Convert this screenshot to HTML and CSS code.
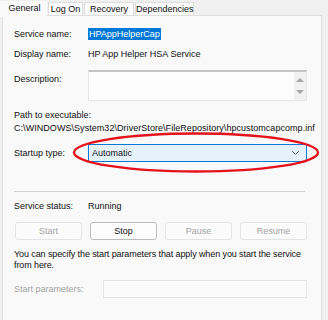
FILE: index.html
```html
<!DOCTYPE html>
<html lang="en">

<head>
    <meta charset="UTF-8">
    <title>Service Properties</title>
    <link rel="stylesheet" href="styles.css">
</head>

<body>
    <div class="dialog">
        <div class="tabs">
            <div class="tab active">General</div>
            <div class="tab tab-logon">Log On</div>
            <div class="tab tab-recovery">Recovery</div>
            <div class="tab tab-deps">Dependencies</div>
        </div>

        <div class="panel">
            <div class="row row-name">
                <span class="label">Service name:</span>
                <span class="value"><span class="selected">HPAppHelperCap</span></span>
            </div>
            <div class="row row-display">
                <span class="label">Display name:</span>
                <span class="value">HP App Helper HSA Service</span>
            </div>
            <div class="row row-desc">
                <span class="label">Description:</span>
                <div class="textarea">
                    <div class="scrollbar">
                        <svg width="8" height="6" viewBox="0 0 8 6"><path d="M0 5 L4 1 L8 5 Z" fill="#a6a6a6"/></svg>
                        <svg width="8" height="6" viewBox="0 0 8 6"><path d="M0 1 L4 5 L8 1 Z" fill="#a6a6a6"/></svg>
                    </div>
                </div>
            </div>

            <div class="path-block">
                <div class="line">Path to executable:</div>
                <div class="line path">C:\WINDOWS\System32\DriverStore\FileRepository\hpcustomcapcomp.inf</div>
            </div>

            <div class="row row-startup">
                <span class="label">Startup type:</span>
                <div class="select">
                    <span>Automatic</span>
                    <svg width="9" height="6" viewBox="0 0 9 6"><path d="M1 1 L4.5 4.5 L8 1" fill="none" stroke="#6d6d6d" stroke-width="1"/></svg>
                </div>
            </div>

            <div class="separator"></div>

            <div class="row row-status">
                <span class="label">Service status:</span>
                <span class="value">Running</span>
            </div>

            <div class="buttons">
                <button class="btn" disabled>Start</button>
                <button class="btn enabled">Stop</button>
                <button class="btn" disabled>Pause</button>
                <button class="btn" disabled>Resume</button>
            </div>

            <p class="hint">You can specify the start parameters that apply when you start the service from here.</p>

            <div class="row row-params">
                <span class="label disabled">Start parameters:</span>
                <div class="input"></div>
            </div>
        </div>

        <svg class="mark" width="252" height="44" viewBox="0 0 252 44">
            <ellipse cx="125" cy="21.5" rx="122" ry="19" fill="none" stroke="#e5121b" stroke-width="2.4"/>
        </svg>
    </div>
</body>

</html>
```

FILE: styles.css
```css
html, body {
    margin: 0;
    padding: 0;
    background: #f0f0f0;
    font-family: 'Liberation Sans', Arial, sans-serif;
    font-size: 9px;
    color: #111;
}

.dialog {
    position: relative;
    width: 328px;
    height: 320px;
    overflow: hidden;
}

.tabs {
    display: flex;
    align-items: flex-end;
    height: 16px;
    position: relative;
    z-index: 1;
}

.tab {
    box-sizing: border-box;
    height: 13px;
    line-height: 12px;
    margin-left: 1px;
    margin-bottom: 1px;
    text-align: center;
    white-space: nowrap;
    background: #fafafa;
    border: 1px solid #dedede;
    border-bottom: none;
}

.tab.active {
    width: 47px;
    height: 16px;
    line-height: 15px;
    margin-left: 0;
    margin-bottom: -1px;
    padding-left: 2px;
    background: #f9f9f9;
    border: none;
}

.tab-logon { width: 35px; }
.tab-recovery { width: 50px; }
.tab-deps { width: 59px; }

.panel {
    margin: -1px 6px 0 2px;
    height: 320px;
    padding: 12px 14px 0 11px;
    background: #f9f9f9;
    border: 1px solid #dedede;
}

.row {
    display: flex;
    align-items: center;
}

.label {
    width: 74px;
    flex-shrink: 0;
}

.label.disabled {
    width: 89px;
    color: #a4a4a4;
}

.row-name,
.row-display,
.row-status {
    height: 12px;
}

.row-display { margin-top: 8px; }
.row-status { margin-top: 8px; }

.selected {
    background: #0078d7;
    color: #fff;
    padding: 1px 1px;
}

.row-desc {
    margin-top: 10px;
    align-items: flex-start;
}

.row-desc .label {
    margin-top: 4px;
}

.textarea {
    flex: 1;
    height: 28px;
    display: flex;
    justify-content: flex-end;
    background: #fdfdfd;
    border: 1px solid #e6e6e6;
    border-top: 2px solid #c4c4c4;
}

.scrollbar {
    width: 12px;
    display: flex;
    flex-direction: column;
    align-items: center;
    justify-content: space-around;
    background: #f1f1f1;
    padding: 2px 0;
}

.path-block {
    margin: 8px -14px 0 0;
    overflow: hidden;
}

.line {
    line-height: 13px;
    white-space: nowrap;
}

.path {
    letter-spacing: 0.05px;
}

.row-startup {
    margin-top: 9px;
}

.select {
    flex: 1;
    height: 16px;
    display: flex;
    align-items: center;
    justify-content: space-between;
    padding: 0 6px 0 3px;
    background: #e5f1fb;
    border: 1px solid #0078d7;
}

.separator {
    margin: 29px 2px 0 0;
    border-top: 1px solid #d2d2d2;
}

.buttons {
    display: grid;
    grid-template-columns: repeat(4, 1fr);
    gap: 8px;
    margin: 10px 0 0 1px;
}

.btn {
    height: 18px;
    padding: 0;
    font-family: inherit;
    font-size: 9px;
    color: #a2a2a2;
    background: #fbfbfb;
    border: 1px solid #e4e4e4;
    border-radius: 3px;
}

.btn.enabled {
    color: #111;
    background: #fdfdfd;
    border-color: #bcbcbc;
}

.hint {
    margin: 9px 0 0;
    line-height: 11px;
    letter-spacing: -0.1px;
}

.row-params {
    margin-top: 9px;
}

.input {
    flex: 1;
    height: 16px;
    background: #fbfbfb;
    border: 1px solid #e4e4e4;
}

.mark {
    position: absolute;
    left: 71px;
    top: 131px;
}
```
